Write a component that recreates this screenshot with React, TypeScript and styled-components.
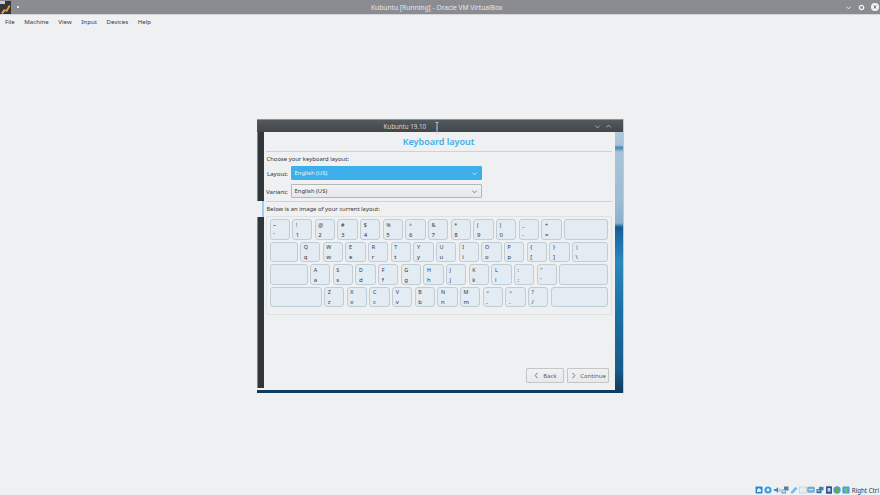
import React from 'react';
import styled, { createGlobalStyle } from 'styled-components';

const GlobalStyle = createGlobalStyle`
  html, body { margin: 0; padding: 0; background: #eff0f1; }
  body { font-family: "Noto Sans", "Open Sans", sans-serif; color: #31363b; }
`;

const Page = styled.div`
  width: 880px;
  height: 495px;
  display: flex;
  flex-direction: column;
  overflow: hidden;
  background: #eff0f1;
`;

const TitleBar = styled.div`
  height: 14px;
  flex: none;
  display: flex;
  align-items: center;
  padding: 0 1px 0 0;
  background: #8b8c91;
  border-bottom: 1px solid #d4d5d7;
  color: #e6e7e9;
  font-size: 6.7px;
`;

const AppIcon = styled.svg`
  width: 11px;
  height: 13px;
  flex: none;
`;

const PinDot = styled.span`
  width: 1.5px;
  height: 1.5px;
  margin-left: 6px;
  background: #e4e5e6;
  flex: none;
`;

const TitleText = styled.div`
  flex: 1;
  text-align: center;
  padding-left: 10px;
`;

const WinButtons = styled.div`
  display: flex;
  align-items: center;
  gap: 6px;
`;

const MenuBar = styled.div`
  height: 12px;
  flex: none;
  display: flex;
  align-items: center;
  gap: 9.6px;
  padding: 0 5px;
  font-size: 6.1px;
`;

const Desktop = styled.div`
  flex: 1;
  display: flex;
  justify-content: center;
  padding-top: 92px;
  position: relative;
`;

const Guest = styled.div`
  width: 367px;
  height: 274px;
  position: relative;
  display: flex;
  flex-direction: column;
  box-sizing: border-box;
  border-right: 1px solid #a9d0ea;
  background: linear-gradient(180deg, #bdd3e3 0, #a6c2d7 9.5%, #3f86b8 10.5%, #a9c4d8 12%, #9dbcd2 30%, #8ab0cb 38%, #155a94 39.5%, #1d6fa9 44%, #2a88bd 52%, #1c70a6 70%, #165a8a 92%, #123f63 98%, #0f3a5c 100%);
`;

const GuestTitle = styled.div`
  height: 13px;
  flex: none;
  display: flex;
  align-items: center;
  justify-content: flex-end;
  gap: 4px;
  padding: 0 11px;
  position: relative;
  background: linear-gradient(180deg, #54595e, #41464b);
  border-top: 1px solid #8e9194;
  box-sizing: border-box;
`;

const GuestTitleText = styled.span`
  position: absolute;
  left: 127px;
  font-size: 6.2px;
  color: #d4d7da;
`;

const Cursor = styled.svg`
  position: absolute;
  left: 178px;
  top: 2px;
  width: 4px;
  height: 12px;
`;

const GuestBody = styled.div`
  height: 256px;
  flex: none;
  display: flex;
`;

const Sidebar = styled.div`
  width: 7px;
  flex: none;
  display: flex;
  flex-direction: column;
`;

const SidebarBlock = styled.div<{ $h?: number }>`
  background: #31363b;
  border-left: 1px solid #84878a;
  ${p => (p.$h ? `height: ${p.$h}px;` : 'flex: 1;')}
`;

const SidebarGap = styled.div`
  height: 16px;
  background: linear-gradient(90deg, #eff0f1 0 5px, #9fcbee 5px 7px);
`;

const Dialog = styled.div`
  width: 351px;
  flex: none;
  box-sizing: border-box;
  padding: 0 3px 0 2px;
  display: flex;
  flex-direction: column;
  background: #eff0f1;
  font-size: 5.9px;
`;

const Heading = styled.div`
  height: 19px;
  flex: none;
  display: flex;
  align-items: center;
  justify-content: center;
  font-size: 9px;
  font-weight: 600;
  color: #3daee9;
  border-bottom: 1px solid #cfd1d3;
`;

const Caption = styled.div<{ $top: number }>`
  margin-top: ${p => p.$top}px;
  padding-left: 1px;
  height: 9px;
  line-height: 9px;
`;

const FieldRow = styled.div<{ $top: number }>`
  margin-top: ${p => p.$top}px;
  height: 14px;
  display: flex;
  align-items: center;
  gap: 2.5px;
`;

const FieldLabel = styled.div`
  width: 22.5px;
  font-size: 6.1px;
  text-align: right;
`;

const Combo = styled.div<{ $active?: boolean }>`
  width: 191px;
  height: 14px;
  box-sizing: border-box;
  display: flex;
  align-items: center;
  justify-content: space-between;
  padding: 0 3px;
  border-radius: 1px;
  border: 1px solid ${p => (p.$active ? '#3daee9' : '#b4b6b8')};
  background: ${p => (p.$active ? '#3daee9' : 'linear-gradient(180deg, #f2f3f4, #e6e7e9)')};
  color: ${p => (p.$active ? '#eaf6fd' : '#31363b')};
`;

const Rule = styled.div`
  margin-top: 3px;
  height: 1px;
  background: #cfd1d3;
`;

const KeyGroup = styled.div`
  margin-top: 2px;
  height: 99px;
  box-sizing: border-box;
  padding: 2px 3px 0;
  display: flex;
  flex-direction: column;
  gap: 2px;
  border: 1px solid #dfe1e3;
  border-radius: 2px;
`;

const KeyRow = styled.div`
  display: flex;
  gap: 2.47px;
  height: 20.6px;
  flex: none;
`;

const KeyCap = styled.div<{ $w?: number; $fill?: boolean }>`
  ${p => (p.$fill ? 'flex: 1;' : `width: ${p.$w ?? 20.2}px; flex: none;`)}
  box-sizing: border-box;
  height: 20.6px;
  padding: 0.5px 0 0 2.5px;
  display: flex;
  flex-direction: column;
  justify-content: space-between;
  border: 1px solid #bfcdd6;
  border-radius: 3px;
  background: #e3ecf3;
  font-size: 5.4px;
  line-height: 8px;
  color: #31363b;
`;

const Lower = styled.span`
  font-size: 6px;
`;

const Footer = styled.div`
  margin-top: auto;
  margin-bottom: 5px;
  display: flex;
  justify-content: flex-end;
  gap: 3.5px;
  padding-right: 3px;
`;

const NavButton = styled.div<{ $w: number }>`
  width: ${p => p.$w}px;
  height: 15px;
  box-sizing: border-box;
  display: flex;
  align-items: center;
  justify-content: center;
  gap: 3.5px;
  border: 1px solid #c3c5c7;
  border-radius: 1px;
  background: linear-gradient(180deg, #f0f1f2, #e8e9ea);
  font-size: 6px;
  color: #5a5c5e;
`;

const LightStrip = styled.div`
  height: 2px;
  width: 358px;
  flex: none;
  background: #eff0f1;
`;

const StatusTray = styled.div`
  position: absolute;
  right: 1px;
  bottom: 0.5px;
  display: flex;
  align-items: center;
  gap: 0.7px;
  font-size: 6.2px;
`;

const TrayIcon = styled.svg`
  width: 8px;
  height: 8px;
  flex: none;
`;

const TrayLabel = styled.span`
  margin-left: 1px;
  color: #31363b;
`;

const Chevron = ({ dir, color, size = 7 }: { dir: 'up' | 'down' | 'left' | 'right'; color: string; size?: number }) => {
  const points = {
    up: '1.5,5 4,2.5 6.5,5',
    down: '1.5,3 4,5.5 6.5,3',
    left: '5,1 2.5,4 5,7',
    right: '3,1 5.5,4 3,7',
  }[dir];
  return (
    <svg width={size} height={size} viewBox="0 0 8 8" fill="none" stroke={color} strokeWidth="1">
      <polyline points={points} />
    </svg>
  );
};

type K = [string, string];
const rows: { lead?: number; keys: K[]; tail?: boolean; wideLast?: K }[] = [
  {
    keys: [['~', '`'], ['!', '1'], ['@', '2'], ['#', '3'], ['$', '4'], ['%', '5'], ['^', '6'], ['&', '7'], ['*', '8'], ['(', '9'], [')', '0'], ['_', '-'], ['+', '=']],
    tail: true,
  },
  {
    lead: 28.2,
    keys: [['Q', 'q'], ['W', 'w'], ['E', 'e'], ['R', 'r'], ['T', 't'], ['Y', 'y'], ['U', 'u'], ['I', 'i'], ['O', 'o'], ['P', 'p'], ['{', '['], ['}', ']']],
    wideLast: ['|', '\\'],
  },
  {
    lead: 38.2,
    keys: [['A', 'a'], ['S', 's'], ['D', 'd'], ['F', 'f'], ['G', 'g'], ['H', 'h'], ['J', 'j'], ['K', 'k'], ['L', 'l'], [':', ';'], ['"', "'"]],
    tail: true,
  },
  {
    lead: 52.2,
    keys: [['Z', 'z'], ['X', 'x'], ['C', 'c'], ['V', 'v'], ['B', 'b'], ['N', 'n'], ['M', 'm'], ['<', ','], ['>', '.'], ['?', '/']],
    tail: true,
  },
];

const App = () => {
  return (
    <Page>
      <GlobalStyle />
      <TitleBar>
        <AppIcon viewBox="0 0 11 13">
          <rect width="11" height="13" fill="#33373b" />
          <rect x="0" y="0" width="5" height="3" fill="#c9cacc" />
          <path d="M1 12 L4 8 L6 9 L9 4 L10.5 5 L7 11 L5 10 L3 13 Z" fill="#f0a030" />
        </AppIcon>
        <PinDot />
        <TitleText>Kubuntu [Running] - Oracle VM VirtualBox</TitleText>
        <WinButtons>
          <Chevron dir="down" color="#f2f2f3" />
          <svg width="7" height="7" viewBox="0 0 8 8">
            <circle cx="4" cy="4" r="2.4" fill="none" stroke="#f2f2f3" strokeWidth="1.5" />
          </svg>
          <svg width="8" height="8" viewBox="0 0 8 8">
            <circle cx="4" cy="4" r="4" fill="#f4f4f5" />
            <path d="M2.8 2.4 L5.2 5.6 M5.2 2.4 L2.8 5.6" stroke="#6d6e72" strokeWidth="1" />
          </svg>
        </WinButtons>
      </TitleBar>
      <MenuBar>
        <span>File</span>
        <span>Machine</span>
        <span>View</span>
        <span>Input</span>
        <span>Devices</span>
        <span>Help</span>
      </MenuBar>
      <Desktop>
        <Guest>
          <GuestTitle>
            <GuestTitleText>Kubuntu 19.10</GuestTitleText>
            <Cursor viewBox="0 0 4 12">
              <path d="M0.5 0.5 H3.5 M2 0.5 V11.5 M0.5 11.5 H3.5" stroke="#d8dadc" strokeWidth="0.8" fill="none" />
              <rect x="1" y="4" width="2" height="3" fill="#4aa3df" />
            </Cursor>
            <Chevron dir="down" color="#b9bcbf" />
            <Chevron dir="up" color="#b9bcbf" />
          </GuestTitle>
          <GuestBody>
            <Sidebar>
              <SidebarBlock $h={69} />
              <SidebarGap />
              <SidebarBlock />
            </Sidebar>
            <Dialog>
              <Heading>Keyboard layout</Heading>
              <Caption $top={3}>Choose your keyboard layout:</Caption>
              <FieldRow $top={2}>
                <FieldLabel>Layout:</FieldLabel>
                <Combo $active>
                  <span>English (US)</span>
                  <Chevron dir="down" color="#d5ecfa" />
                </Combo>
              </FieldRow>
              <FieldRow $top={4}>
                <FieldLabel>Variant:</FieldLabel>
                <Combo>
                  <span>English (US)</span>
                  <Chevron dir="down" color="#6a6e72" />
                </Combo>
              </FieldRow>
              <Rule />
              <Caption $top={3}>Below is an image of your current layout:</Caption>
              <KeyGroup>
                {rows.map((row, i) => (
                  <KeyRow key={i}>
                    {row.lead ? <KeyCap $w={row.lead} /> : null}
                    {row.keys.map(([up, low]) => (
                      <KeyCap key={low}>
                        <span>{up}</span>
                        <Lower>{low}</Lower>
                      </KeyCap>
                    ))}
                    {row.wideLast ? (
                      <KeyCap $fill>
                        <span>{row.wideLast[0]}</span>
                        <Lower>{row.wideLast[1]}</Lower>
                      </KeyCap>
                    ) : null}
                    {row.tail ? <KeyCap $fill /> : null}
                  </KeyRow>
                ))}
              </KeyGroup>
              <Footer>
                <NavButton $w={37.5}>
                  <Chevron dir="left" color="#666" />
                  Back
                </NavButton>
                <NavButton $w={41.5}>
                  <Chevron dir="right" color="#666" />
                  Continue
                </NavButton>
              </Footer>
            </Dialog>
          </GuestBody>
          <LightStrip />
        </Guest>
        <StatusTray>
          <TrayIcon viewBox="0 0 8 8">
            <rect x="0.5" y="0.5" width="7" height="7" rx="1" fill="#2f86cf" />
            <path d="M2 6 V3.5 L4 2 L6 3.5 V6 Z" fill="#dcecf8" />
          </TrayIcon>
          <TrayIcon viewBox="0 0 8 8">
            <circle cx="4" cy="4" r="3.6" fill="#3f9fe0" />
            <circle cx="4" cy="4" r="1.4" fill="#e8f3fb" />
          </TrayIcon>
          <TrayIcon viewBox="0 0 8 8">
            <path d="M1 3 H3 L5 1 V7 L3 5 H1 Z" fill="#3a8bc8" />
            <path d="M5.5 2.5 H7.5 V6 H5.5 Z" fill="#b5c4d0" />
          </TrayIcon>
          <TrayIcon viewBox="0 0 8 8">
            <rect x="3" y="0.5" width="4.5" height="4" fill="#5b7f9e" />
            <rect x="0.5" y="3.5" width="4.5" height="4" fill="#7f98ad" />
            <rect x="1.3" y="4.3" width="2.9" height="2" fill="#cfe0ec" />
          </TrayIcon>
          <TrayIcon viewBox="0 0 8 8">
            <path d="M0.8 6 L5.5 0.8 L7.4 2.6 L2.8 7.4 L0.8 7.2 Z" fill="#74b6e8" />
          </TrayIcon>
          <TrayIcon viewBox="0 0 8 8">
            <rect x="0.5" y="1" width="7" height="6" fill="#e9ecee" stroke="#c4c8cb" strokeWidth="0.6" />
          </TrayIcon>
          <TrayIcon viewBox="0 0 8 8">
            <rect x="0.5" y="1" width="7" height="5.5" rx="0.8" fill="#6fb0de" stroke="#7d9cb5" strokeWidth="0.5" />
            <rect x="1.8" y="3.2" width="4.4" height="1" fill="#e4f0f9" />
          </TrayIcon>
          <TrayIcon viewBox="0 0 8 8">
            <rect x="3" y="0.8" width="4.5" height="3.5" fill="#3f82c4" />
            <rect x="0.5" y="3" width="5" height="4.2" fill="#2f6aa8" />
            <rect x="1.3" y="3.8" width="3" height="1.6" fill="#9cc8ea" />
          </TrayIcon>
          <TrayIcon viewBox="0 0 8 8">
            <rect x="1" y="0.3" width="6" height="7.4" rx="0.5" fill="#34508f" />
            <rect x="2.6" y="2" width="2.8" height="3.6" fill="#c9d6ec" />
          </TrayIcon>
          <TrayIcon viewBox="0 0 8 8">
            <circle cx="4" cy="4" r="3.7" fill="#4f9fd0" />
            <path d="M4 1 L7 4 L4 7 L1.6 5 L2.5 2.6 Z" fill="#58b04f" />
          </TrayIcon>
          <TrayIcon viewBox="0 0 8 8">
            <rect x="0.4" y="0.4" width="7.2" height="7.2" rx="1" fill="#4aa0dc" />
            <path d="M1.8 4 L4 1.6 L6.2 4 L4.9 4 V6.4 H3.1 V4 Z" fill="#6fcf55" />
          </TrayIcon>
          <TrayLabel>Right Ctrl</TrayLabel>
        </StatusTray>
      </Desktop>
    </Page>
  );
};

export default App;
